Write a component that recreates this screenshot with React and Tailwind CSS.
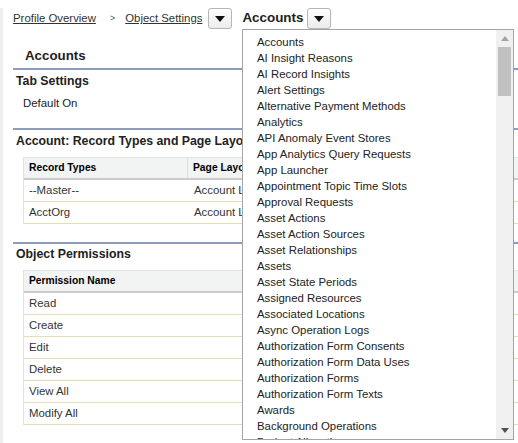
import React from "react";

const items = [
  "Accounts",
  "AI Insight Reasons",
  "AI Record Insights",
  "Alert Settings",
  "Alternative Payment Methods",
  "Analytics",
  "API Anomaly Event Stores",
  "App Analytics Query Requests",
  "App Launcher",
  "Appointment Topic Time Slots",
  "Approval Requests",
  "Asset Actions",
  "Asset Action Sources",
  "Asset Relationships",
  "Assets",
  "Asset State Periods",
  "Assigned Resources",
  "Associated Locations",
  "Async Operation Logs",
  "Authorization Form Consents",
  "Authorization Form Data Uses",
  "Authorization Forms",
  "Authorization Form Texts",
  "Awards",
  "Background Operations",
  "Budget Allocations",
  "Budgets",
];

function DropButton() {
  return (
    <div className="flex h-[21px] w-[24px] items-center justify-center rounded-[3px] border border-[#b5b5b5] bg-gradient-to-b from-white to-[#ececec]">
      <svg width="10" height="6" viewBox="0 0 10 6">
        <polygon points="0,0 10,0 5,6" fill="#111" />
      </svg>
    </div>
  );
}

function Table({ headers, rows, firstWidth }) {
  return (
    <div className="ml-[20px] w-[560px] border-l border-[#e0e3e5]">
      <div className="flex h-[23px] items-center border-t border-[#e0e3e5] border-b-2 border-b-[#cccccc] bg-[#f2f3f3] text-[10.3px] font-bold text-[#000]">
        {headers.map((h, i) => (
          <div
            key={i}
            className={
              i === 0
                ? "flex h-full shrink-0 items-center border-r border-[#dedede] pl-[5px]"
                : "flex h-full items-center pl-[5px]"
            }
            style={i === 0 ? { width: firstWidth - 1 } : undefined}
          >
            {h}
          </div>
        ))}
      </div>
      {rows.map((r, i) => (
        <div
          key={i}
          className="flex h-[22px] items-center border-b border-[#e3deb8] text-[11.4px] text-[#333]"
        >
          {r.map((c, j) => (
            <div
              key={j}
              className={j === 0 ? "shrink-0 pl-[5px]" : "pl-[5px]"}
              style={j === 0 ? { width: firstWidth } : undefined}
            >
              {c}
            </div>
          ))}
        </div>
      ))}
    </div>
  );
}

export default function App() {
  return (
    <div
      className="relative h-[443px] w-[518px] overflow-hidden bg-white"
      style={{ fontFamily: '"Liberation Sans", Arial, sans-serif' }}
    >
      <div className="h-full border-l-[3px] border-[#eeeeee]">
        {/* breadcrumb */}
        <div className="mt-[8px] flex h-[21px] items-center pl-[10px] text-[11.4px] text-[#333]">
          <span className="underline">Profile Overview</span>
          <span className="ml-[14px] mr-[10px] text-[9px] text-[#555]">&gt;</span>
          <span className="underline">Object Settings</span>
          <div className="ml-[6px]">
            <DropButton />
          </div>
          <span className="ml-[10px] text-[13.4px] font-bold text-[#222]">Accounts</span>
          <div className="ml-[4px]">
            <DropButton />
          </div>
        </div>

        {/* Accounts heading */}
        <div className="mt-[17px] h-[20px] pl-[22px] text-[13.3px] font-bold leading-[20px] text-[#222]">
          Accounts
        </div>
        <div className="ml-[10px] mt-[2px] h-[2px] bg-[#8e9cbe]" />

        {/* Tab settings */}
        <div className="mt-[3px] h-[16px] pl-[13px] text-[12.3px] font-bold leading-[16px] text-[#222]">
          Tab Settings
        </div>
        <div className="mt-[6px] h-[16px] pl-[20px] text-[11.4px] leading-[16px] text-[#222]">
          Default On
        </div>
        <div className="ml-[10px] mt-[17px] h-[2px] bg-[#8e9cbe]" />

        {/* Record types */}
        <div className="mt-[3px] h-[16px] whitespace-nowrap pl-[13px] text-[12.3px] font-bold leading-[16px] text-[#222]">
          Account: Record Types and Page Layouts
        </div>
        <div className="mt-[8px]">
          <Table
            firstWidth={165}
            headers={["Record Types", "Page Layout Assignment"]}
            rows={[
              ["--Master--", "Account Layout"],
              ["AcctOrg", "Account Layout"],
            ]}
          />
        </div>
        <div className="ml-[10px] mt-[18px] h-[2px] bg-[#8e9cbe]" />

        {/* Object permissions */}
        <div className="mt-[2px] h-[16px] pl-[13px] text-[12.3px] font-bold leading-[16px] text-[#222]">
          Object Permissions
        </div>
        <div className="mt-[8px]">
          <Table
            firstWidth={250}
            headers={["Permission Name", "Enabled"]}
            rows={[
              ["Read", ""],
              ["Create", ""],
              ["Edit", ""],
              ["Delete", ""],
              ["View All", ""],
              ["Modify All", ""],
            ]}
          />
        </div>
      </div>

      {/* dropdown overlay */}
      <div className="absolute left-[242px] top-[29px] flex h-[411px] w-[272px] border border-[#a5a5a5] bg-white">
        <div className="flex-1 overflow-hidden pl-[14px] pt-[4px] text-[11.4px] leading-[16px] text-[#222]">
          {items.map((it) => (
            <div key={it} className="h-[16px] whitespace-nowrap">
              {it}
            </div>
          ))}
        </div>
        <div className="flex w-[17px] flex-col items-center bg-[#f0f0f0]">
          <div className="flex h-[17px] w-full items-center justify-center">
            <svg width="8" height="5" viewBox="0 0 8 5">
              <polygon points="0,5 8,5 4,0" fill="#a3a3a3" />
            </svg>
          </div>
          <div className="h-[49px] w-[13px] bg-[#c1c1c1]" />
          <div className="flex-1" />
          <div className="flex h-[17px] w-full items-center justify-center">
            <svg width="8" height="5" viewBox="0 0 8 5">
              <polygon points="0,0 8,0 4,5" fill="#505050" />
            </svg>
          </div>
        </div>
      </div>
    </div>
  );
}
